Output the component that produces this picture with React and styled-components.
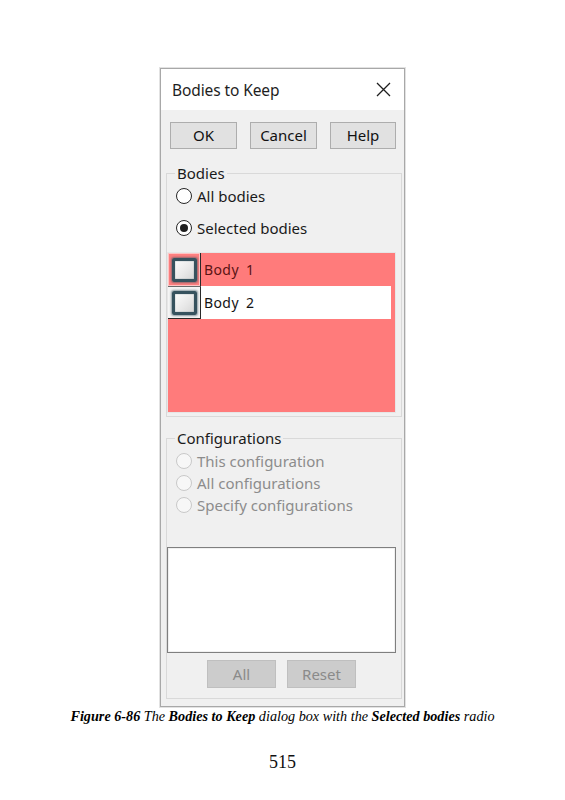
import React from 'react';
import styled, { createGlobalStyle, css } from 'styled-components';

const GlobalStyle = createGlobalStyle`
  html, body {
    margin: 0;
    padding: 0;
    background: #ffffff;
  }
  * {
    box-sizing: border-box;
  }
`;

const uiFont = `"Noto Sans", "Open Sans", "DejaVu Sans", sans-serif`;

const Page = styled.div`
  width: 565px;
  height: 800px;
  padding-top: 68px;
  display: flex;
  flex-direction: column;
  align-items: center;
  font-family: ${uiFont};
`;

const Dialog = styled.div`
  width: 245px;
  border: 1px solid #a8a8a8;
  box-shadow: 0 0 0 1px #e2e2e2;
  background: #f0f0f0;
  display: flex;
  flex-direction: column;
`;

const TitleBar = styled.div`
  height: 41px;
  background: #ffffff;
  display: flex;
  align-items: center;
  justify-content: space-between;
  padding: 0 13px 0 11px;
`;

const Title = styled.span`
  font-size: 15.5px;
  color: #1e1e1e;
  letter-spacing: -0.1px;
`;

const CloseIcon = styled.svg`
  width: 15px;
  height: 15px;
  display: block;
`;

const Content = styled.div`
  padding: 12px 2px 7px 5px;
  display: flex;
  flex-direction: column;
`;

const ButtonRow = styled.div`
  display: flex;
  gap: 13px;
  padding-left: 4px;
`;

const Button = styled.button`
  width: ${p => p.$w || 67}px;
  height: ${p => p.$h || 27}px;
  margin: 0;
  padding: 0;
  background: ${p => (p.disabled ? '#cccccc' : '#e1e1e1')};
  border: 1px solid ${p => (p.disabled ? '#bfbfbf' : '#adadad')};
  color: ${p => (p.disabled ? '#8a8a8a' : '#111111')};
  font-family: ${uiFont};
  font-size: 15px;
  line-height: 1;
`;

const Group = styled.fieldset`
  margin: ${p => p.$top}px 0 0 0;
  padding: 0 5px ${p => p.$bottom}px 0;
  border: 1px solid #d9d9d9;
  border-radius: 0;
  width: 236px;
  min-width: 0;
  display: flex;
  flex-direction: column;
`;

const Legend = styled.legend`
  margin-left: 8px;
  padding: 0 2px;
  font-size: 15px;
  line-height: 18px;
  color: #1a1a1a;
`;

const RadioRow = styled.label`
  display: flex;
  align-items: center;
  gap: 5px;
  height: ${p => p.$h}px;
  margin-top: ${p => p.$mt || 0}px;
  padding-left: 9px;
  font-size: 15px;
  color: ${p => (p.$disabled ? '#8c8c8c' : '#1a1a1a')};
`;

const RadioCircle = styled.span`
  width: 16px;
  height: 16px;
  border-radius: 50%;
  flex: none;
  display: flex;
  align-items: center;
  justify-content: center;
  ${p =>
    p.$disabled
      ? css`
          border: 1px solid #c9c9c9;
          background: #f7f7f7;
        `
      : css`
          border: 1.5px solid #262626;
          background: #ffffff;
        `}
  &::after {
    content: '';
    width: 8px;
    height: 8px;
    border-radius: 50%;
    background: #1f1f1f;
    display: ${p => (p.$checked ? 'block' : 'none')};
  }
`;

const BodyList = styled.div`
  margin-top: 12px;
  width: 229px;
  height: 161px;
  background: #ff7b7b;
  border: 1px solid #e6e6e6;
  display: flex;
  flex-direction: column;
`;

const BodyRow = styled.div`
  display: flex;
  height: 33px;
  padding-right: ${p => (p.$selected ? 0 : 4)}px;
`;

const CheckCell = styled.div`
  width: 33px;
  flex: none;
  display: flex;
  align-items: center;
  justify-content: center;
  border-right: 1.5px solid #2a2a2a;
  ${p =>
    p.$selected
      ? css`
          background: #ff8080;
          box-shadow: inset 0 0 0 1px #ffc4c4;
        `
      : css`
          background: #f4f4f4;
          border-bottom: 1.5px solid #2a2a2a;
          border-top: 1px solid #6a6a6a;
        `}
`;

const CheckBox = styled.span`
  width: 25px;
  height: 24px;
  border: 3px solid #36525e;
  border-radius: 2px;
  box-shadow: 0 0 2px 1px rgba(54, 82, 94, 0.55), inset 0 0 1px #36525e;
  background: linear-gradient(135deg, #fbfbfb 0%, #e9e9e9 55%, #d6d6d6 100%);
`;

const BodyName = styled.div`
  flex: 1;
  display: flex;
  align-items: center;
  padding-left: 3px;
  font-size: 14px;
  letter-spacing: 0.4px;
  word-spacing: 3px;
  color: ${p => (p.$selected ? '#5a1414' : '#141414')};
  background: ${p => (p.$selected ? 'transparent' : '#ffffff')};
`;

const ConfigBox = styled.div`
  margin-top: 31px;
  width: 229px;
  height: 106px;
  background: #ffffff;
  border: 1px solid #7f7f7f;
  box-shadow: inset 0 0 0 1px #f0f0f0;
`;

const BottomButtons = styled.div`
  width: 229px;
  margin-top: 7px;
  display: flex;
  justify-content: center;
  gap: 11px;
`;

const Caption = styled.p`
  margin: 0;
  font-family: "Liberation Serif", "Times New Roman", serif;
  font-style: italic;
  font-size: 14.2px;
  line-height: 18px;
  color: #000000;
  white-space: nowrap;
  b {
    font-weight: 700;
  }
`;

const PageNumber = styled.div`
  margin-top: 27px;
  font-family: "Liberation Serif", "Times New Roman", serif;
  font-size: 18px;
  color: #111111;
`;

const Radio = ({ label, checked, disabled, h, mt }) => (
  <RadioRow $h={h} $mt={mt} $disabled={disabled}>
    <RadioCircle $checked={checked} $disabled={disabled} />
    {label}
  </RadioRow>
);

const bodies = [
  { name: 'Body 1', selected: true },
  { name: 'Body 2', selected: false },
];

export default function App() {
  return (
    <>
      <GlobalStyle />
      <Page>
        <Dialog>
          <TitleBar>
            <Title>Bodies to Keep</Title>
            <CloseIcon viewBox="0 0 15 15">
              <path d="M1 1 L14 14 M14 1 L1 14" stroke="#1e1e1e" strokeWidth="1.3" fill="none" />
            </CloseIcon>
          </TitleBar>
          <Content>
            <ButtonRow>
              <Button>OK</Button>
              <Button>Cancel</Button>
              <Button $w={66}>Help</Button>
            </ButtonRow>

            <Group $top={15} $bottom={3}>
              <Legend>Bodies</Legend>
              <Radio label="All bodies" h={24} mt={2} />
              <Radio label="Selected bodies" h={24} mt={8} checked />
              <BodyList>
                {bodies.map(b => (
                  <BodyRow key={b.name} $selected={b.selected}>
                    <CheckCell $selected={b.selected}>
                      <CheckBox />
                    </CheckCell>
                    <BodyName $selected={b.selected}>{b.name}</BodyName>
                  </BodyRow>
                ))}
              </BodyList>
            </Group>

            <Group $top={12} $bottom={10}>
              <Legend>Configurations</Legend>
              <Radio label="This configuration" h={22} mt={3} disabled />
              <Radio label="All configurations" h={22} disabled />
              <Radio label="Specify configurations" h={22} disabled />
              <ConfigBox />
              <BottomButtons>
                <Button $w={69} $h={28} disabled>All</Button>
                <Button $w={69} $h={28} disabled>Reset</Button>
              </BottomButtons>
            </Group>
          </Content>
        </Dialog>
        <Caption>
          <b>Figure 6-86</b> The <b>Bodies to Keep</b> dialog box with the <b>Selected bodies</b> radio
        </Caption>
        <PageNumber>515</PageNumber>
      </Page>
    </>
  );
}
